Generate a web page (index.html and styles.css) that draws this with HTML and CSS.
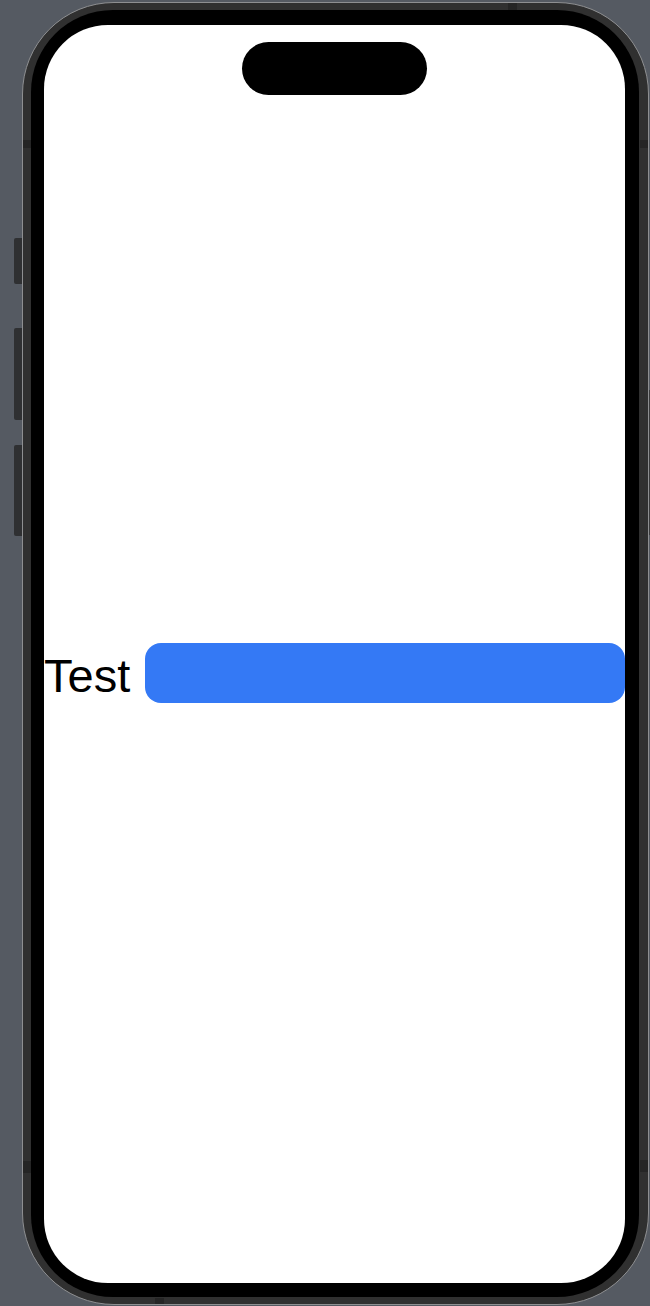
FILE: index.html
```html
<!DOCTYPE html>
<html lang="en">
<head>
<meta charset="utf-8">
<title>Test</title>
<link rel="stylesheet" href="styles.css">
</head>
<body>
  <div class="device">
    <span class="side-btn btn-action"></span>
    <span class="side-btn btn-vol-up"></span>
    <span class="side-btn btn-vol-down"></span>
    <span class="side-btn-right"></span>
    <span class="band band-lt"></span>
    <span class="band band-lb"></span>
    <span class="band band-rt"></span>
    <span class="band band-rb"></span>
    <span class="band band-top"></span>
    <span class="band band-bottom"></span>
    <div class="bezel">
      <div class="screen">
        <div class="island"></div>
        <div class="row">
          <span class="label">Test</span>
          <div class="bar"></div>
        </div>
      </div>
    </div>
  </div>
</body>
</html>
```

FILE: styles.css
```css
html, body {
  margin: 0;
  padding: 0;
}
body {
  width: 650px;
  height: 1306px;
  overflow: hidden;
  background: #555a62;
  padding: 2px 0 0 22px;
  box-sizing: border-box;
}
.device {
  position: relative;
  width: 627px;
  height: 1303px;
  box-sizing: border-box;
  border: 1px solid #8e8f91;
  border-radius: 92px;
  background: #303030;
  padding: 7px 9px 7px 8px;
}
.bezel {
  height: 100%;
  box-sizing: border-box;
  background: #000;
  border-radius: 82px;
  padding: 15px 14px 14px 13px;
}
.screen {
  height: 100%;
  background: #fff;
  border-radius: 64px;
  display: flex;
  flex-direction: column;
  overflow: hidden;
}
.island {
  align-self: center;
  margin-top: 17px;
  width: 185px;
  height: 53px;
  border-radius: 27px;
  background: #000;
}
.row {
  margin-top: 548px;
  height: 60px;
  display: flex;
  align-items: center;
  gap: 15px;
}
.label {
  font-family: "Liberation Sans", Arial, sans-serif;
  font-size: 47px;
  color: #000;
  line-height: 1;
  padding-top: 4px;
}
.bar {
  flex: 1;
  height: 60px;
  border-radius: 16px;
  background: #3479f5;
}
.side-btn {
  position: absolute;
  left: -9px;
  width: 8px;
  background: #2f3032;
  border-radius: 2px 0 0 2px;
}
.btn-action { top: 235px; height: 46px; }
.btn-vol-up { top: 325px; height: 92px; }
.btn-vol-down { top: 442px; height: 91px; }
.side-btn-right {
  position: absolute;
  right: -2px;
  top: 387px;
  width: 1px;
  height: 145px;
  background: #3a3b3d;
}
.band {
  position: absolute;
  background: #252525;
}
.band-lt { left: 0; top: 137px; width: 8px; height: 8px; }
.band-lb { left: 0; top: 1158px; width: 8px; height: 12px; }
.band-rt { right: 0; top: 137px; width: 8px; height: 8px; }
.band-rb { right: 0; top: 1157px; width: 8px; height: 12px; }
.band-top { top: 0; left: 485px; width: 9px; height: 7px; }
.band-bottom { bottom: 0; left: 132px; width: 9px; height: 6px; }
```
